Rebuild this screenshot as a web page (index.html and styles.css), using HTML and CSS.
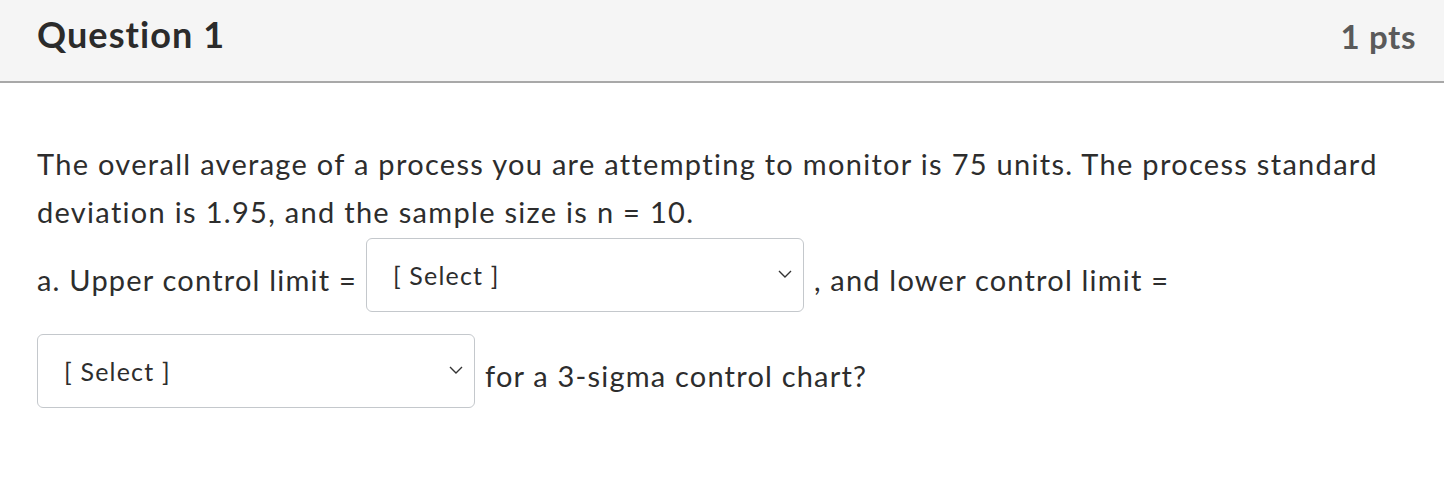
FILE: index.html
```html
<!DOCTYPE html>
<html lang="en">
<head>
<meta charset="utf-8">
<title>Question 1</title>
<link rel="stylesheet" href="styles.css">
</head>
<body>
<div class="question">
  <div class="q-header">
    <h2 class="q-title">Question 1</h2>
    <div class="q-points">1 pts</div>
  </div>
  <div class="q-body">
    <p class="q-text">The overall average of a process you are attempting to monitor is 75 units. The process standard deviation is 1.95, and the sample size is n = 10.</p>
    <div class="q-answer">
      <span class="txt">a. Upper control limit =</span>
      <span class="select"><span class="select-label">[ Select ]</span><svg class="chev" width="14" height="8" viewBox="0 0 14 8"><path d="M1 1 L7 7 L13 1" fill="none" stroke="#333" stroke-width="1.4"/></svg></span>
      <span class="txt">, and lower control limit =</span>
      <span class="select"><span class="select-label">[ Select ]</span><svg class="chev" width="14" height="8" viewBox="0 0 14 8"><path d="M1 1 L7 7 L13 1" fill="none" stroke="#333" stroke-width="1.4"/></svg></span>
      <span class="txt">for a 3-sigma control chart?</span>
    </div>
  </div>
</div>
</body>
</html>
```
FILE: styles.css
```css
html, body {
  margin: 0;
  padding: 0;
  background: #ffffff;
}
body {
  font-family: Lato, "Open Sans", sans-serif;
  color: #2d2d2d;
}
.q-header {
  box-sizing: border-box;
  height: 83px;
  background: #f5f5f5;
  border-bottom: 2px solid #a8a8a8;
  display: flex;
  align-items: center;
  justify-content: space-between;
  padding: 0 28px 10px 37px;
}
.q-title {
  margin: 0 0 4px 0;
  font-size: 36px;
  font-weight: 700;
  color: #2b2b2b;
  letter-spacing: 1.1px;
}
.q-points {
  font-size: 33px;
  font-weight: 700;
  color: #5a5a5a;
  letter-spacing: 0.6px;
}
.q-body {
  padding: 57px 20px 0 37px;
}
.q-text {
  margin: 0;
  font-size: 29px;
  line-height: 48px;
  letter-spacing: 1.3px;
  color: #2d2d2d;
}
.q-answer {
  display: flex;
  flex-wrap: wrap;
  align-items: flex-start;
  row-gap: 22px;
  margin-top: 2px;
  font-size: 29px;
  line-height: 48px;
  letter-spacing: 1.2px;
}
.txt {
  margin-top: 18px;
  white-space: nowrap;
}
.q-answer .txt:first-child {
  margin-right: 9px;
}
.select {
  box-sizing: border-box;
  width: 438px;
  height: 74px;
  border: 1px solid #c4c8cc;
  border-radius: 6px;
  display: flex;
  align-items: center;
  justify-content: space-between;
  padding: 0 11px 0 26px;
  margin-right: 10px;
  background: #fff;
}
.select-label {
  font-size: 25px;
  line-height: 30px;
  letter-spacing: 1.2px;
  color: #2d2d2d;
}
.chev {
  display: block;
  margin-top: -2px;
}
```
